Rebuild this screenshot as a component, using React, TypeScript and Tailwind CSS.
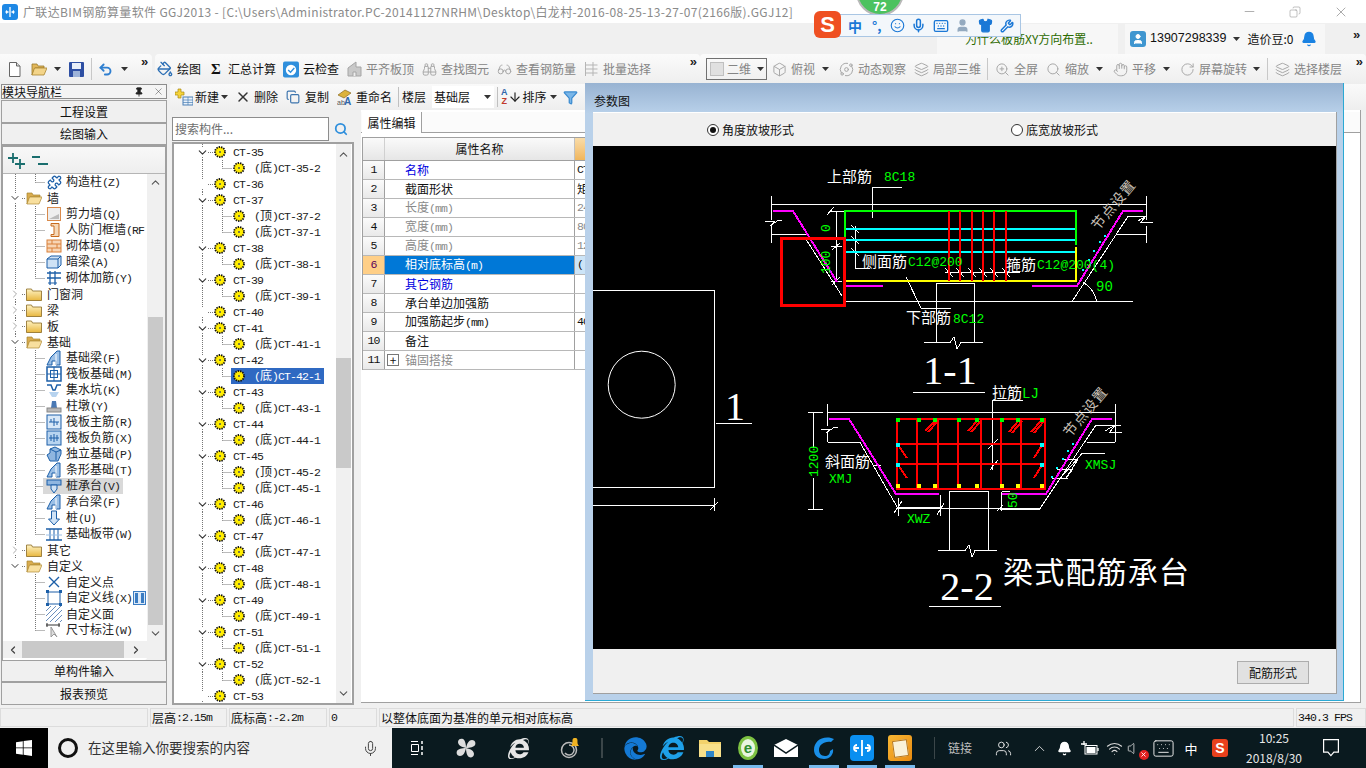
import React from "react";
import { Mic, ChevronDown, ChevronRight, ChevronUp, ChevronLeft, Bell, Wifi, X, Copy, Minus, Undo2, PaintBucket, Binoculars, Glasses, Box, Orbit, Layers, ZoomIn, Search, Hand, RotateCw, Smile, Shirt, Wrench, Keyboard, User, Puzzle, Users, Volume, Filter, ArrowDown, Pin } from "lucide-react";
import { FaEdge, FaInternetExplorer } from "react-icons/fa";

const MONO = "[font-family:'Liberation_Mono','Noto_Sans_CJK_SC',monospace] text-[11.500px] tracking-[-0.9px]";

function Mx({ t }: { t: string }) {
  const parts = t.split(/([\x20-\x7e]+)/).filter(Boolean);
  return (
    <>
      {parts.map((p, i) =>
        /^[\x20-\x7e]+$/.test(p) ? (
          <span key={i} className={MONO}>{p}</span>
        ) : (
          <span key={i}>{p}</span>
        )
      )}
    </>
  );
}

const Caret = () => (
  <svg width="7" height="4" viewBox="0 0 7 4" className="shrink-0"><path d="M0 0h7L3.500 4z" fill="#333" /></svg>
);

function Tool({ icon, label, dim, caret, w }: { icon: React.ReactNode; label: string; dim?: boolean; caret?: boolean; w?: string }) {
  return (
    <div className={"flex items-center shrink-0 gap-1 " + (dim ? "text-[#858585]" : "text-[#111]")}>
      <span className="w-4 h-4 flex items-center justify-center shrink-0">{icon}</span>
      <span className="whitespace-nowrap leading-4">{label}</span>
      {caret ? <span className={"flex justify-center " + (w ?? "w-[13px]")}><Caret /></span> : null}
    </div>
  );
}

const Sep = () => <div className="w-px h-[22px] bg-[#c8c8c8] shrink-0" />;
const More = () => <span className="text-[13px] leading-none font-bold text-[#222] [font-family:'Liberation_Sans',sans-serif]">»</span>;

function TitleBar() {
  return (
    <div className="h-[23px] bg-white flex items-center shrink-0">
      <div className="w-4 h-4 ml-[2px] rounded-[3px] bg-[#1e88e5] flex items-center justify-center">
        <svg width="12" height="12" viewBox="0 0 12 12"><path d="M6 1v10M1.500 6h3M7.500 6h3M3 4.500a2 2 0 0 0 0 3M9 4.500a2 2 0 0 1 0 3" stroke="#fff" strokeWidth="1.300" fill="none" /></svg>
      </div>
      <span className="ml-[5px] text-[#8a8a8a] text-[12px] whitespace-nowrap tracking-[0.35px]">广联达BIM钢筋算量软件 GGJ2013 - [C:\Users\Administrator.PC-20141127NRHM\Desktop\白龙村-2016-08-25-13-27-07(2166版).GGJ12]</span>
      <div className="ml-auto mr-[2px] flex items-center text-[#808080]">
        <span className="w-[46px] flex justify-center"><Minus size={15} strokeWidth={1} /></span>
        <span className="w-[46px] flex justify-center"><Copy size={12} strokeWidth={1} className="scale-x-[-1]" /></span>
        <span className="w-[46px] flex justify-center"><X size={16} strokeWidth={1} /></span>
      </div>
    </div>
  );
}

function InfoRow() {
  return (
    <div className="h-[31px] flex items-center shrink-0 bg-[#f0f0f0] pl-[937px]">
      <div className="w-[181px] h-[30px] bg-[#f7f7f7] flex items-center pl-[28px] pt-[1px] text-[#2c6b00] whitespace-nowrap">为什么板筋XY方向布置..</div>
      <div className="w-[200px] ml-[7px] h-[30px] bg-[#f7f7f7] flex items-center text-[#111]">
        <span className="w-4 h-4 ml-[5px] rounded-[3px] bg-[#3f96d0] flex items-center justify-center"><User size={12} color="#fff" fill="#fff" /></span>
        <span className="ml-1 [font-family:'Liberation_Sans',sans-serif] text-[12.500px]">13907298339</span>
        <span className="ml-[7px]"><Caret /></span>
        <span className="ml-[7px] whitespace-nowrap">造价豆:0</span>
        <span className="ml-[8px]"><Bell size={16} color="#1a82e2" fill="#1a82e2" /></span>
      </div>
      <span className="ml-[28px] -mt-2"><More /></span>
    </div>
  );
}

const Page = () => <svg width="13" height="15" viewBox="0 0 13 15"><path d="M1.500.500h7l3.500 3.500v10.500h-10.500z" fill="#fff" stroke="#666" /><path d="M8.500.500v3.500h3.500" fill="#ddd" stroke="#666" /></svg>;
const FolderO = () => <svg width="16" height="14" viewBox="0 0 16 14"><path d="M1 2h5l1 2h6v2H4L1 13z" fill="#e2b75a" stroke="#9a7a2c" strokeWidth=".8" /><path d="M3.500 6H16l-3 7H1z" fill="#f3d489" stroke="#a8842f" strokeWidth=".8" /></svg>;
const Floppy = () => <svg width="15" height="15" viewBox="0 0 15 15"><rect width="15" height="15" rx="1" fill="#2e4fa3" /><rect x="3" y="1" width="9" height="6" fill="#e8eef8" /><rect x="4" y="9" width="7" height="6" fill="#9db3d9" /></svg>;
const CloudCheck = () => <svg width="17" height="17" viewBox="0 0 17 17"><rect width="17" height="17" rx="2" fill="#2f8fdc" /><circle cx="8.500" cy="9" r="5.500" fill="#fff" /><path d="M5.500 9l2.500 2.500 4-4.500" stroke="#2f8fdc" strokeWidth="1.500" fill="none" /></svg>;
const GrayBlock = () => <svg width="15" height="16" viewBox="0 0 15 16"><path d="M1 15V7l8-6v5h5v9z" fill="#c9c9c9" stroke="#a5a5a5" /><path d="M6 15v-4h3v4" fill="#eee" stroke="#a5a5a5" /></svg>;
const Batch = () => <svg width="15" height="16" viewBox="0 0 15 16" stroke="#b5b5b5" fill="none"><path d="M1.500 1v14M1.500 4h12M1.500 8h12M1.500 12h12M9 1v14" /></svg>;
const GreyG = { size: 15, color: "#a8a8a8", strokeWidth: 1.600 };

function ToolRow() {
  return (
    <div className="h-[30px] flex shrink-0 bg-[#f0f0f0] items-stretch">
      <div className="w-[152px] rounded-r-[4px] bg-gradient-to-b from-[#fbfbfb] to-[#eeeeee] flex items-center shrink-0 relative">
        <span className="ml-[8px]"><Page /></span>
        <span className="ml-[10px]"><FolderO /></span>
        <span className="ml-[7px]"><Caret /></span>
        <span className="ml-[8px]"><Floppy /></span>
        <span className="ml-[7px] mr-[6px]"><Sep /></span>
        <Undo2 size={15} color="#2f7fd0" strokeWidth={3} />
        <span className="ml-[8px]"><Caret /></span>
        <span className="ml-[13px] -mt-4"><More /></span>
      </div>
      <div className="w-[545px] ml-[3px] rounded-[4px] bg-gradient-to-b from-[#fbfbfb] to-[#eeeeee] flex items-center pl-[2px] gap-[7px] shrink-0">
        <Tool icon={<PaintBucket size={16} color="#2c6fb5" />} label="绘图" />
        <Tool icon={<span className="font-bold text-[15px] [font-family:'Liberation_Serif',serif]">Σ</span>} label="汇总计算" />
        <Tool icon={<CloudCheck />} label="云检查" />
        <Tool dim icon={<GrayBlock />} label="平齐板顶" />
        <Tool dim icon={<Binoculars {...GreyG} />} label="查找图元" />
        <Tool dim icon={<Glasses {...GreyG} />} label="查看钢筋量" />
        <Tool dim icon={<Batch />} label="批量选择" />
        <span className="ml-auto mr-[3px] -mt-4"><More /></span>
      </div>
      <div className="flex-1 rounded-[4px] bg-gradient-to-b from-[#fbfbfb] to-[#eeeeee] flex items-center pl-[6px] relative">
        <div className="w-[61px] h-[22px] border border-[#707070] flex items-center shrink-0 text-[#858585]">
          <span className="ml-[3px] w-[14px] h-[14px] bg-[#e0e0e0] border border-[#c0c0c0]" />
          <span className="ml-[3px]">二维</span>
          <span className="ml-[6px]"><Caret /></span>
        </div>
        <div className="flex items-center gap-[6px] ml-[4px]">
          <Tool dim caret icon={<Box {...GreyG} />} label="俯视" />
          <Tool dim icon={<Orbit {...GreyG} />} label="动态观察" />
          <span className="ml-px"><Tool dim icon={<Layers {...GreyG} />} label="局部三维" /></span>
          <Sep />
          <Tool dim icon={<ZoomIn {...GreyG} />} label="全屏" />
          <span className="ml-px"><Tool dim caret icon={<Search {...GreyG} />} label="缩放" /></span>
          <Tool dim caret icon={<Hand {...GreyG} />} label="平移" />
          <Tool dim caret w="w-[10px]" icon={<RotateCw {...GreyG} />} label="屏幕旋转" />
          <Sep />
          <Tool dim icon={<Layers {...GreyG} />} label="选择楼层" />
        </div>
        <span className="ml-auto mr-[3px] -mt-4"><More /></span>
      </div>
    </div>
  );
}

const Ic = ({ children }: { children: React.ReactNode }) => (
  <svg width="16" height="16" viewBox="0 0 16 16" fill="none" className="shrink-0">{children}</svg>
);
const B = "#1c5fa8";
const icons: Record<string, React.ReactNode> = {
  gz: <Puzzle size={15} color={B} strokeWidth={2} />,
  jlq: <Ic><rect x="1.500" y="1.500" width="13" height="13" fill="#eee" stroke="#d98a4b" /><path d="M3 13h10V8z" fill="#bbb" /></Ic>,
  rf: <Ic><path d="M5 1.500h8v13H5v-2h3V4H5z" fill="#f5d8b8" stroke="#c86a1e" /></Ic>,
  qt: <Ic><rect x="1" y="2" width="14" height="12" fill="#f7d5b5" stroke="#d9803a" /><path d="M1 6h14M1 10h14M6 2v4M11 6v4M6 10v4" stroke="#d9803a" /></Ic>,
  al: <Ic><path d="M1 5l4-3h10v9l-3 3H1z" fill="#cfe2f5" stroke={B} /><path d="M1 5h11v9M12 5l3-3" stroke={B} /></Ic>,
  jj: <Ic><path d="M1 3h14M1 8h14M4 1v14M9 1v14" stroke={B} strokeWidth="1.300" /><path d="M2 13h9" stroke={B} /></Ic>,
  jcl: <Ic><path d="M1 15l4-8 6-6h3v14h-4v-4H6v4z" fill="#9cc0e6" stroke={B} /><path d="M10 15V4" stroke="#fff" /></Ic>,
  fb: <Ic><rect x="1" y="1" width="14" height="14" stroke={B} strokeWidth="1.500" /><rect x="4.500" y="4.500" width="7" height="7" stroke={B} /><path d="M8 1v14M1 8h14" stroke={B} /></Ic>,
  jsk: <Ic><path d="M1 3h4l2 5h2l2-5h4" stroke={B} strokeWidth="1.500" /><path d="M3 10h10l-3 5H6z" fill="#b7d3ef" /></Ic>,
  zd: <Ic><path d="M6 3h4l1 7H5z" fill="#4a79b4" /><rect x="1" y="10" width="14" height="4" fill="#b9b9b9" stroke="#888" /></Ic>,
  fz: <Ic><rect x="1" y="1" width="14" height="14" fill="#d8e8f8" stroke={B} /><path d="M3 8h10M8 4v8M5 5v3M11 8v3" stroke={B} /></Ic>,
  fj: <Ic><rect x="1" y="1" width="14" height="14" fill="#b8d4f0" stroke={B} /><path d="M3 8h10M8 4v8M5 5v6M11 5v6" stroke={B} /></Ic>,
  dl: <Ic><path d="M1 9l3-2V3l5-2 6 3v4l-3 7H4z" fill="#8fb6e0" stroke={B} /><path d="M4 3l6 3v8M10 6l5-2" stroke={B} /></Ic>,
  zct: <Ic><rect x="1" y="2" width="14" height="5" fill="#8fb6e0" stroke={B} /><path d="M5 7h6v4l-3 4-3-4z" fill="#cfe2f5" stroke={B} /></Ic>,
  zhuang: <Ic><path d="M5.500 1h5v8h3l-5.500 6-5.500-6h3z" fill="#cfe2f5" stroke={B} /></Ic>,
  jb: <Ic><path d="M0 3h16M0 14h16" stroke={B} strokeWidth="1.500" /><path d="M4 3v11M8 3v11M12 3v11" stroke={B} /><path d="M0 9h16" stroke="#9cc0e6" /></Ic>,
  dian: <Ic><path d="M3 3l10 10M13 3L3 13" stroke={B} strokeWidth="1.400" /></Ic>,
  xian: <Ic><rect x="2" y="2" width="12" height="12" stroke={B} /><path d="M0 0h3v3H0zM13 0h3v3h-3zM0 13h3v3H0zM13 13h3v3h-3z" fill={B} /></Ic>,
  mian: <Ic><path d="M0 5L5 0M0 10L10 0M0 15L15 0M4 16L16 4M9 16l7-7M14 16l2-2" stroke="#6b8fbd" /></Ic>,
  cc: <Ic><path d="M0 3h14M1 1v4M13 1v4" stroke="#333" /><path d="M5 5v10l3-3 3 3z" fill="#ddd" stroke="#999" /></Ic>,
};

const Folder = ({ open }: { open?: boolean }) =>
  open ? (
    <svg width="16" height="13" viewBox="0 0 16 13"><path d="M1 1h5l1 2h7v2H4L1 12z" fill="#d9ac4f" stroke="#a8842f" strokeWidth=".7" /><path d="M3.500 5H16l-3 7H1z" fill="#f8df9e" stroke="#b08a35" strokeWidth=".7" /></svg>
  ) : (
    <svg width="16" height="13" viewBox="0 0 16 13"><defs><linearGradient id="fg" x1="0" y1="0" x2="0" y2="1"><stop offset="0" stopColor="#fff3c4" /><stop offset="1" stopColor="#e8b73f" /></linearGradient></defs><path d="M.500 1h5l1 2h9v9.500H.500z" fill="url(#fg)" stroke="#8a6a22" strokeWidth=".8" /></svg>
  );

type LRow = { t: string; i?: string; f?: "o" | "c"; v0?: boolean; last?: boolean; hi?: boolean; extra?: boolean };
const leftRows: LRow[] = [
  { t: "构造柱(Z)", i: "gz", v0: true, last: true },
  { t: "墙", f: "o", v0: true },
  { t: "剪力墙(Q)", i: "jlq", v0: true },
  { t: "人防门框墙(RF", i: "rf", v0: true },
  { t: "砌体墙(Q)", i: "qt", v0: true },
  { t: "暗梁(A)", i: "al", v0: true },
  { t: "砌体加筋(Y)", i: "jj", v0: true, last: true },
  { t: "门窗洞", f: "c", v0: true },
  { t: "梁", f: "c", v0: true },
  { t: "板", f: "c", v0: true },
  { t: "基础", f: "o", v0: true },
  { t: "基础梁(F)", i: "jcl", v0: true },
  { t: "筏板基础(M)", i: "fb", v0: true },
  { t: "集水坑(K)", i: "jsk", v0: true },
  { t: "柱墩(Y)", i: "zd", v0: true },
  { t: "筏板主筋(R)", i: "fz", v0: true },
  { t: "筏板负筋(X)", i: "fj", v0: true },
  { t: "独立基础(P)", i: "dl", v0: true },
  { t: "条形基础(T)", i: "jcl", v0: true },
  { t: "桩承台(V)", i: "zct", v0: true, hi: true },
  { t: "承台梁(F)", i: "jcl", v0: true },
  { t: "桩(U)", i: "zhuang", v0: true },
  { t: "基础板带(W)", i: "jb", v0: true, last: true },
  { t: "其它", f: "c", v0: true },
  { t: "自定义", f: "o" },
  { t: "自定义点", i: "dian" },
  { t: "自定义线(X)", i: "xian", extra: true },
  { t: "自定义面", i: "mian" },
  { t: "尺寸标注(W)", i: "cc", last: true },
];

function LeftTree() {
  return (
    <div className="flex-1 overflow-hidden">
      {leftRows.map((r, k) => (
        <div key={k} className="h-4 flex items-center whitespace-nowrap text-[#222]">
          {r.f ? (
            <>
              <span className="w-[23px] h-4 relative shrink-0 flex items-center">
                {r.v0 ? <svg width="23" height="16" className="absolute left-0 top-0"><path d="M12.500 0v3M12.500 13v3M19 8.500h4" stroke="#777" strokeDasharray="1 1" /></svg> : <svg width="23" height="16" className="absolute left-0 top-0"><path d="M19 8.500h4" stroke="#777" strokeDasharray="1 1" /></svg>}
                <span className="ml-[6px] relative">
                  {r.f === "o" ? <ChevronDown size={12} color="#333" strokeWidth={2} /> : <ChevronRight size={12} color="#a8a8a8" strokeWidth={2} />}
                </span>
              </span>
              <Folder open={r.f === "o"} />
              <span className="ml-[5px]"><Mx t={r.t} /></span>
            </>
          ) : (
            <>
              <svg width="43" height="16" className="shrink-0">
                <path d={(r.v0 ? "M12.500 0v16" : "") + (r.last ? "M32.500 0v8.500" : "M32.500 0v16") + "M32.500 8.500h10"} stroke="#777" strokeDasharray="1 1" fill="none" />
              </svg>
              <span className={"flex items-center h-4 pr-[3px] -ml-[3px] pl-[3px] " + (r.hi ? "bg-[#d9d9d9]" : "")}>
                <span className="w-4 h-4 flex items-center justify-center shrink-0">{icons[r.i!]}</span>
                <span className="ml-[4px]"><Mx t={r.t} /></span>
                {r.extra ? <span className="ml-[1px] w-[13px] h-[14px] bg-[#dce9f7] border border-[#3a7cc2] flex items-center justify-center shrink-0"><span className="w-[9px] h-[10px] border-x-[3px] border-[#3a7cc2]" /></span> : null}
              </span>
            </>
          )}
        </div>
      ))}
    </div>
  );
}

function LeftPanel() {
  const btn = "border border-[#a0a0a0] bg-[#f0f0f0] flex items-center justify-center text-[#111] shrink-0";
  return (
    <div className="w-[168px] shrink-0 flex flex-col pl-[1px] pr-[1px]">
      <div className="h-[15px] border border-[#8c8c8c] bg-[#f4f4f4] flex items-center leading-none text-[#111] shrink-0">
        <span>模块导航栏</span>
        <span className="ml-auto mr-[9px]"><Pin size={10} color="#222" fill="#222" /></span>
        <span className="mr-[2px]"><X size={11} color="#333" strokeWidth={1} /></span>
      </div>
      <div className={"mt-px h-[23px] " + btn}>工程设置</div>
      <div className={"h-[22px] " + btn}>绘图输入</div>
      <div className="h-[515px] border-2 border-[#a0a0a0] flex flex-col shrink-0">
        <div className="h-[26px] bg-gradient-to-b from-[#f8f8f8] to-[#eeeeee] flex items-center pl-[5px] shrink-0">
          <svg width="40" height="17" viewBox="0 0 40 17" fill="none"><path d="M5 1v10M0 6h10M12 7v10M7 12h10" stroke="#1a6e6e" strokeWidth="1.800" /><path d="M24 5h8M30 12h10" stroke="#1a6e6e" strokeWidth="1.800" /></svg>
        </div>
        <div className="flex-1 flex bg-[#f0f0f0] min-h-0 border-t border-[#b5b5b5]">
          <div className="w-[144px] bg-white flex flex-col rounded-br-[3px]"><LeftTree /></div>
          <div className="w-[16px] flex flex-col bg-[#f0f0f0] items-center">
            <ChevronUp size={13} color="#555" className="mt-[2px] mb-[128px]" />
            <div className="w-[15px] flex-1 bg-[#c9c9c9]" />
            <ChevronDown size={13} color="#555" className="mt-[2px] mb-[20px]" />
          </div>
        </div>
        <div className="h-[17px] flex items-center bg-[#f0f0f0] shrink-0 -mt-[19px] relative">
          <span className="w-[19px] flex justify-center"><ChevronLeft size={12} color="#444" strokeWidth={2.500} /></span>
          <span className="w-[102px] h-full bg-[#c9c9c9]" />
          <span className="w-[24px] flex justify-center"><ChevronRight size={12} color="#444" strokeWidth={2.500} /></span>
        </div>
      </div>
      <div className={"h-[22px] " + btn}>单构件输入</div>
      <div className={"h-[23px] " + btn}>报表预览</div>
    </div>
  );
}

const Gear = () => (
  <svg width="14" height="14" viewBox="0 0 14 14" className="shrink-0">
    <circle cx="7" cy="7" r="5" fill="#ffe800" stroke="#111" strokeWidth="1.800" strokeDasharray="1.400 1" />
    <circle cx="7" cy="7" r="2.600" fill="#fff200" />
    <circle cx="7" cy="7" r="1" fill="#555" />
  </svg>
);

type CT = { n: string; c: string[] };
const cts: CT[] = [
  { n: "35", c: ["底)CT-35-2"] },
  { n: "36", c: [] },
  { n: "37", c: ["顶)CT-37-2", "底)CT-37-1"] },
  { n: "38", c: ["底)CT-38-1"] },
  { n: "39", c: ["底)CT-39-1"] },
  { n: "40", c: [] },
  { n: "41", c: ["底)CT-41-1"] },
  { n: "42", c: ["底)CT-42-1"] },
  { n: "43", c: ["底)CT-43-1"] },
  { n: "44", c: ["底)CT-44-1"] },
  { n: "45", c: ["顶)CT-45-2", "底)CT-45-1"] },
  { n: "46", c: ["底)CT-46-1"] },
  { n: "47", c: ["底)CT-47-1"] },
  { n: "48", c: ["底)CT-48-1"] },
  { n: "49", c: ["底)CT-49-1"] },
  { n: "51", c: ["底)CT-51-1"] },
  { n: "52", c: ["底)CT-52-1"] },
  { n: "53", c: [] },
];

function CompTree() {
  return (
    <div className="flex-1 overflow-hidden">
      {cts.map((g) => (
        <React.Fragment key={g.n}>
          <div className="h-4 flex items-center text-[#222] whitespace-nowrap">
            <span className="w-[39px] h-4 relative shrink-0 flex items-center justify-end">
              <svg width="39" height="16" className="absolute left-0 top-0">
                <path d="M28.500 0v3M28.500 13v3M34 8.500h5" stroke="#777" strokeDasharray="1 1" fill="none" />
              </svg>
              {g.c.length ? <span className="absolute left-[22px] top-[2px]"><ChevronDown size={13} color="#333" strokeWidth={2} /></span> : null}
            </span>
            <Gear />
            <span className="ml-[6px]"><Mx t={"CT-" + g.n} /></span>
          </div>
          {g.c.map((c, i) => {
            const last = i === g.c.length - 1;
            const sel = g.n === "42";
            return (
              <div key={i} className="h-4 flex items-center text-[#222] whitespace-nowrap">
                <svg width="58" height="16" className="shrink-0">
                  <path d={"M28.500 0v16M48.500 0" + (last ? "v8.500" : "v16") + "M48.500 8.500h10"} stroke="#777" strokeDasharray="1 1" fill="none" />
                </svg>
                <span className={"flex items-center h-4 pl-[1px] pr-[4px] -ml-[1px] " + (sel ? "bg-[#2f69c2] text-white" : "")}>
                  <Gear />
                  <span className="ml-[8px]"><Mx t={"(" + c} /></span>
                </span>
              </div>
            );
          })}
        </React.Fragment>
      ))}
    </div>
  );
}

function MidColumn() {
  const tip = "h-[26px] flex items-center shrink-0 bg-gradient-to-b from-[#fafafa] to-[#eeeeee] rounded-l-[3px] ml-[2px] text-[#111] whitespace-nowrap";
  return (
    <div className="flex-1 min-w-0 flex flex-col">
      <div className={tip}>
        <svg width="18" height="18" viewBox="0 0 18 18" className="ml-[5px] shrink-0"><path d="M3 1h3v3h3v3H6v3H3V7H0V4h3z" fill="#f5d33a" stroke="#a98a16" strokeWidth=".7" /><rect x="8" y="9" width="10" height="8" fill="#e9f1fa" stroke="#4b7fb5" /><path d="M8 12h10M8 14.500h10M13 9v8" stroke="#4b7fb5" strokeWidth=".7" /></svg>
        <span className="ml-[2px]">新建</span>
        <span className="ml-[2px]"><Caret /></span>
        <X size={16} color="#333" strokeWidth={2.200} className="ml-[7px]" />
        <span className="ml-[3px]">删除</span>
        <Copy size={14} color="#3c74ad" className="ml-[8px]" />
        <span className="ml-[5px]">复制</span>
        <svg width="18" height="17" viewBox="0 0 18 17" className="ml-[8px] shrink-0"><path d="M1 6l7-5 6 3-7 5z" fill="#dcb23c" stroke="#8a6a22" strokeWidth=".7" /><text x="7" y="16" fontSize="10" fontWeight="bold" fill="#2f66aa" className="[font-family:'Liberation_Sans',sans-serif]">A</text><text x="0" y="16" fontSize="7" fill="#555" className="[font-family:'Liberation_Sans',sans-serif]">ab</text></svg>
        <span className="ml-[1px]">重命名</span>
        <span className="w-px h-[20px] bg-[#c0c0c0] ml-[6px]" />
        <span className="ml-[3px]">楼层</span>
        <div className="ml-[6px] w-[62px] h-[22px] bg-white flex items-center pl-[2px]">
          <span>基础层</span>
          <span className="ml-auto mr-[3px]"><Caret /></span>
        </div>
        <span className="w-px h-[20px] bg-[#c0c0c0] ml-[3px]" />
        <span className="ml-[3px] flex flex-col text-[9px] leading-[9px] font-bold [font-family:'Liberation_Sans',sans-serif] items-center"><span className="text-[#2f66aa]">A</span><span className="text-[#c0392b]">Z</span></span>
        <ArrowDown size={14} color="#222" />
        <span className="ml-[1px]">排序</span>
        <span className="ml-[3px]"><Caret /></span>
        <Filter size={15} color="#3b8bd0" fill="#7ab6e8" className="ml-[6px]" />
      </div>
      <div className="flex-1 flex min-h-0">
        <div className="w-[183px] ml-[4px] flex flex-col shrink-0">
          <div className="h-[32px] pt-[7px] flex shrink-0">
            <div className="w-[157px] h-[24px] bg-white border border-[#8d8d8d] text-[#6e6e6e] flex items-center pl-[2px]">搜索构件...</div>
            <span className="w-[24px] h-[24px] flex items-center justify-center"><Search size={14} color="#2f8fdc" strokeWidth={3} /></span>
          </div>
          <div className="h-[563px] border-2 border-[#a0a0a0] bg-white flex relative mr-[1px] overflow-hidden">
            <CompTree />
            <div className="w-[15px] mr-[1px] bg-[#f0f0f0] flex flex-col items-center shrink-0 relative">
              <ChevronUp size={13} color="#555" className="mt-[4px] mb-[197px]" />
              <div className="w-[15px] h-[110px] bg-[#c9c9c9]" />
              <ChevronDown size={13} color="#555" className="mt-auto mb-[3px]" />
            </div>
          </div>
        </div>
        <PropPanel />
      </div>
    </div>
  );
}

type PR = { n: number; t: string; v?: string; c?: string; sel?: boolean; plus?: boolean };
const props: PR[] = [
  { n: 1, t: "名称", v: "CT", c: "text-[#0000e0]" },
  { n: 2, t: "截面形状", v: "矩" },
  { n: 3, t: "长度(mm)", v: "24", c: "text-[#8a8a8a]" },
  { n: 4, t: "宽度(mm)", v: "80", c: "text-[#8a8a8a]" },
  { n: 5, t: "高度(mm)", v: "12", c: "text-[#8a8a8a]" },
  { n: 6, t: "相对底标高(m)", v: "(", sel: true },
  { n: 7, t: "其它钢筋", c: "text-[#0000e0]" },
  { n: 8, t: "承台单边加强筋" },
  { n: 9, t: "加强筋起步(mm)", v: "40" },
  { n: 10, t: "备注" },
  { n: 11, t: "锚固搭接", c: "text-[#8a8a8a]", plus: true },
];

function PropPanel() {
  return (
    <div className="flex-1 min-w-0 flex flex-col ml-[6px] mr-[5px] mb-[5px] bg-white border-r border-b border-[#a0a0a0]">
      <div className="h-[21px] mt-[2px] border-b border-[#a0a0a0] flex items-end shrink-0 bg-[#fbfbfb]">
        <div className="h-[21px] w-[60px] ml-px border-r border-[#a0a0a0] bg-white flex items-center justify-center text-[#111] -mb-px">属性编辑</div>
      </div>
      <div className="h-[4px] shrink-0" />
      <div className="w-[970px] border-l border-t border-[#a0a0a0] ml-px flex flex-col shrink-0">
        <div className="h-[23px] flex border-b border-[#a0a0a0]">
          <div className="w-[22px] bg-gradient-to-b from-[#fafafa] to-[#e6e6e6] border-r border-[#d0d0d0]" />
          <div className="w-[190px] bg-gradient-to-b from-[#fafafa] to-[#e6e6e6] border-r border-[#c0c0c0] flex items-center justify-center text-[#111]">属性名称</div>
          <div className="flex-1 bg-gradient-to-b from-[#f9dca8] to-[#f0b65c]" />
        </div>
        {props.map((p) => (
          <div key={p.n} className="h-[19px] flex border-b border-[#b8b8b8]">
            <div className={"w-[22px] flex items-center justify-center border-r border-[#a0a0a0] shrink-0 " + (p.sel ? "bg-[#ffcf87] text-[#5a005a]" : "bg-gradient-to-b from-[#fbfbfb] to-[#e9e9e9] text-[#111]")}>
              <span className={MONO}>{p.n}</span>
            </div>
            <div className={"w-[190px] flex items-center shrink-0 border-r border-[#a0a0a0] " + (p.sel ? "bg-[#0078d7] text-white" : p.c ?? "text-[#111]")}>
              {p.plus ? (
                <span className="ml-[2px] w-[12px] h-[12px] border border-[#777] flex items-center justify-center text-[#111] text-[12px] leading-none">+</span>
              ) : null}
              <span className={p.plus ? "ml-[6px]" : "ml-[20px]"}><Mx t={p.t} /></span>
            </div>
            <div className={"flex-1 flex items-center pl-[2px] " + (p.sel ? "bg-[#cce4f7]" : "") + " " + (p.c === "text-[#8a8a8a]" ? "text-[#8a8a8a]" : "text-[#111]")}>
              <Mx t={p.v ?? ""} />
            </div>
          </div>
        ))}
      </div>
    </div>
  );
}

function StatusBar() {
  const c = "h-[19px] border border-[#dcdcdc] bg-[#f0f0f0] flex items-center pl-[1px] text-[#111] whitespace-nowrap shrink-0";
  return (
    <div className="h-[20px] flex shrink-0 bg-[#f0f0f0] gap-[2px]">
      <div className={c + " w-[148px]"} />
      <div className={c + " w-[77px]"}><Mx t="层高:2.15m" /></div>
      <div className={c + " w-[98px]"}><Mx t="底标高:-2.2m" /></div>
      <div className={c + " w-[48px]"}><Mx t="0" /></div>
      <div className={c + " w-[915px]"}><Mx t="以整体底面为基准的单元相对底标高" /></div>
      <div className={c + " w-[70px]"}><Mx t="340.3 FPS" /></div>
    </div>
  );
}

function Slot({ w, children, on }: { w: string; children?: React.ReactNode; on?: boolean }) {
  return (
    <div className={"h-full flex items-center justify-center shrink-0 relative " + w}>
      {children}
      {on ? <span className="absolute bottom-0 inset-x-[4px] h-[3px] bg-[#76b9ed]" /> : null}
    </div>
  );
}

function Taskbar() {
  return (
    <div className="h-[40px] flex bg-[#0a1a1f] shrink-0 text-[#e8e8e8]">
      <div className="w-[48px] bg-black flex items-center justify-center shrink-0">
        <svg width="16" height="16" viewBox="0 0 16 16"><path d="M0 2.200L6.800 1.200v6.300H0zM7.600 1.100L16 0v7.500H7.600zM0 8.300h6.800v6.500L0 13.800zM7.600 8.300H16V16l-8.400-1.200z" fill="#fff" /></svg>
      </div>
      <div className="w-[344px] bg-[#f0f0f0] flex items-center shrink-0 text-[#333] text-[13.500px]">
        <span className="ml-[10px] w-[20px] h-[20px] rounded-full border-[3px] border-[#111]" />
        <span className="ml-[10px] whitespace-nowrap">在这里输入你要搜索的内容</span>
        <span className="ml-auto mr-[13px]"><Mic size={17} color="#444" strokeWidth={1.400} /></span>
      </div>
      <Slot w="w-[48px]"><svg width="16" height="16" viewBox="0 0 16 16" fill="none" stroke="#fff"><path d="M3 1.500h7M3 14.500h7M3.500 4.500h7v7h-7z" /><path d="M14 1v3M14 6v4M14 12v3" strokeWidth="1.500" /></svg></Slot>
      <Slot w="w-[52px]"><svg width="22" height="22" viewBox="0 0 22 22" fill="#ddd"><path d="M11 11C6 10 3 8 3 5s3-4 5-3 3 5 3 9zM11 11c1-5 3-8 6-8s4 3 3 5-5 3-9 3zM11 11c5 1 8 3 8 6s-3 4-5 3-3-5-3-9zM11 11c-1 5-3 8-6 8s-4-3-3-5 5-3 9-3z" /></svg></Slot>
      <Slot w="w-[52px]"><FaInternetExplorer size={21} color="#e6e6e6" /></Slot>
      <Slot w="w-[54px]">
        <svg width="24" height="24" viewBox="0 0 24 24" fill="none"><circle cx="10" cy="14" r="7.500" stroke="#bbb" strokeWidth="1.500" /><path d="M10 9a5 5 0 1 1-4 8" stroke="#bbb" strokeWidth="1.500" /><path d="M12 10c3-3 0-7 3-8h2c3 1 0 5 3 8z" fill="#f0b323" /></svg>
      </Slot>
      <div className="w-[19px] flex items-center justify-start shrink-0"><span className="w-[2px] h-[20px] bg-[#3b4649] ml-[3px]" /></div>
      <Slot w="w-[36px]"><FaEdge size={23} color="#1479d4" /></Slot>
      <Slot w="w-[38px]"><FaInternetExplorer size={24} color="#1ea0e8" /></Slot>
      <Slot w="w-[38px]">
        <svg width="22" height="22" viewBox="0 0 22 22"><path d="M0 3h8l2 2h12v15H0z" fill="#f3d26b" /><rect x="0" y="7" width="22" height="13" fill="#f8e08a" /><path d="M7 20v-6h8v6z" fill="#2f86c8" /></svg>
      </Slot>
      <Slot w="w-[38px]" on><svg width="24" height="26" viewBox="0 0 24 26"><ellipse cx="12" cy="13" rx="10" ry="12" fill="#7dc242" /><ellipse cx="12" cy="13" rx="7" ry="9" fill="#e8f5e0" /><text x="12" y="18" textAnchor="middle" fontSize="15" fontWeight="bold" fill="#2f8f2f" className="[font-family:'Liberation_Sans',sans-serif]">e</text></svg></Slot>
      <Slot w="w-[38px]"><svg width="24" height="18" viewBox="0 0 24 18"><path d="M0 6L12 0l12 6v12H0z" fill="#fff" /><path d="M0 6l12 8 12-8" stroke="#0a1a1f" strokeWidth="1.500" fill="none" /></svg></Slot>
      <Slot w="w-[38px]" on><svg width="24" height="26" viewBox="0 0 24 26"><path d="M19 3C9 1 2 7 2 15c0 6 5 9 10 9 6 0 10-5 9-10l-3 2c0 3-2 5-5 5-4 0-6-3-6-6 0-5 5-9 12-8l3-3z" fill="#1a8fe8" /></svg></Slot>
      <Slot w="w-[38px]" on><span className="w-[24px] h-[26px] rounded-[4px] bg-[#0a8ff0] flex items-center justify-center"><svg width="18" height="18" viewBox="0 0 18 18" fill="none" stroke="#fff" strokeWidth="1.800"><path d="M9 1v16M1 9h5M12 9h5M4 6a3 3 0 0 0 0 6M14 6a3 3 0 0 1 0 6" /></svg></span></Slot>
      <Slot w="w-[38px]" on><span className="w-[24px] h-[26px] rounded-[3px] bg-gradient-to-br from-[#f7b733] to-[#e98b0f] flex items-center justify-center"><span className="w-[15px] h-[17px] bg-[#f9f1d8] border border-[#b6761a] rotate-[-8deg]" /></span></Slot>
      <div className="w-[23px] flex items-center justify-end shrink-0"><span className="w-px h-[22px] bg-[#3b4649] mr-[7px]" /></div>
      <Slot w="w-[36px]"><span className="text-[12px] text-[#bfbfbf]">链接</span></Slot>
      <Slot w="w-[50px]"><Users size={17} color="#eee" strokeWidth={1.300} /></Slot>
      <Slot w="w-[22px]"><ChevronUp size={17} color="#eee" strokeWidth={1.200} /></Slot>
      <Slot w="w-[28px]"><Bell size={15} color="#fff" fill="#fff" /></Slot>
      <Slot w="w-[24px]"><svg width="18" height="14" viewBox="0 0 18 14" fill="none" stroke="#fff"><rect x="4" y="4.500" width="12" height="8.500" /><rect x="6" y="6.500" width="8" height="5" fill="#fff" /><path d="M17 7v3M3 0v4M0 3h6" strokeWidth="1.300" /></svg></Slot>
      <Slot w="w-[24px]"><Wifi size={17} color="#d8d8d8" strokeWidth={1.500} /></Slot>
      <Slot w="w-[16px]">
        <span className="relative flex"><Volume size={15} color="#eee" strokeWidth={1.200} /><span className="absolute -right-[7px] bottom-[-4px] w-[10px] h-[10px] rounded-full bg-[#e02020] flex items-center justify-center"><X size={7} color="#fff" strokeWidth={3} /></span></span>
      </Slot>
      <Slot w="w-[42px]"><Keyboard size={23} color="#eee" strokeWidth={1} /></Slot>
      <Slot w="w-[14px]"><span className="text-[13px] text-white">中</span></Slot>
      <Slot w="w-[44px]"><span className="w-[16px] h-[18px] rounded-[3px] bg-[#e8401c] flex items-center justify-center text-white font-bold text-[14px] [font-family:'Liberation_Sans',sans-serif]">S</span></Slot>
      <div className="w-[64px] shrink-0 flex flex-col items-center justify-center text-[12px] leading-[20px] text-[#e8e8e8] whitespace-nowrap">
        <span>10:25</span>
        <span>2018/8/30</span>
      </div>
      <Slot w="w-[50px]"><svg width="16" height="18" viewBox="0 0 16 18" fill="none" stroke="#fff" strokeWidth="1.200"><path d="M.600.600h14.800v12.500h-4.500l-3 3.500-3-3.500H.600z" /></svg></Slot>
    </div>
  );
}

function T({ x, y, s = 15, f = "#fff", mono, r, children, ls }: { x: number; y: number; s?: number; f?: string; mono?: boolean; r?: number; children: React.ReactNode; ls?: number }) {
  return (
    <text
      x={x}
      y={y}
      fontSize={s}
      fill={f}
      letterSpacing={ls}
      className={mono ? "[font-family:'Liberation_Mono',monospace]" : "[font-family:'Noto_Sans_CJK_SC',sans-serif]"}
      transform={r !== undefined ? `rotate(${r} ${x} ${y})` : undefined}
    >
      {children}
    </text>
  );
}

function Cad() {
  const G = "#00ff00";
  const big = "[font-family:'Liberation_Serif',serif]";
  const dotsX = [898, 919, 935, 959, 977, 1002, 1018, 1042];
  const vv = [949, 960, 972, 983, 994, 1006];
  return (
    <svg width="743" height="503" viewBox="593 146 743 503" className="block">
      <rect x="593" y="146" width="743" height="503" fill="#000" />
      <circle cx="641.700" cy="384.700" r="33.500" fill="none" stroke="#fff" />
      <g shapeRendering="crispEdges" fill="none">
        <path d="M593 290.500H714.500V487.500H593M716 423.500H752M593 505.500H714.500M714.500 498V511M710 510L718 502" stroke="#fff" />
        <path d="M771.500 204.500H1146.500M771.500 196V220M771.500 226V243M772 234.500H806M765 221H775L770 226L778 220.500H782M806.500 240L842 296M843 301.500H1133M1072 301.500L1128 216.500H1146M1116 234.500H1146.500M1146.500 196V220M1146.500 226V243M1138 221L1146 216L1141 222H1153" stroke="#fff" />
        <path d="M836.500 211V281M831 211H845M831 246.500H842M831 281.500H842M827 215L834 207M832 250L840 243M832 285L840 277" stroke="#fff" />
        <path d="M855.500 226V268H870M851 225L859 233M851 236L859 244M851 248L859 256M872.500 218V187H902M906 277L921 308H951M945 272.500H1020" stroke="#fff" />
        {vv.map((x) => (<path key={x} d={`M${x - 4} 268L${x + 4} 277`} stroke="#fff" />))}
        <path d="M936.500 342V283.500H974.500V342M924 342.500H950L954 337L957 349L961 342.500H983" stroke="#fff" />
        <path d="M1083 282Q1094 289 1096.500 301" stroke="#fff" />
        <path d="M773 211H793L837 282M845 286H883M1032 286H1077L1123 211H1143" stroke="#ff00ff" strokeWidth="2" />
        <path d="M845 229H1076M845 240H1076M845 252H1076" stroke="#00ffff" strokeWidth="2" />
        <path d="M845 238V211H1076V245" stroke="#00ff00" strokeWidth="2" />
        <path d="M845 238V281H1076V247" stroke="#ffff00" strokeWidth="2" />
        {vv.map((x) => (<path key={x} d={`M${x} 211V281`} stroke="#ff0000" strokeWidth="2" />))}
        <rect x="781.500" y="238.500" width="63" height="67" stroke="#ff0000" strokeWidth="3.500" />
        <path d="M827.500 404V426M827.500 432V442M828 412.500H1115.500M821 429H831L826 433L834 427.500H838M828 442.500H860L898 508.500H1040L1096 425H1121M1115.500 404V442M1087 442.500H1115M1105 431L1115 425L1110 432H1122" stroke="#fff" />
        <path d="M813.500 412V448M813.500 478V509M808 412.500H823M808 509.500H823M898 498V516M940 495V516M894 513L902 501M937 515L944 503M898 507.500H940" stroke="#fff" />
        <path d="M949.500 550V491.500H988.500V550M938 550.500H965L969 545L972 557L975 550.500H997" stroke="#fff" />
        <path d="M992.500 400V470M992.500 400H1023M988 449L998 439M990 470L998 460M1001.500 491.500H1010M1001.500 492V511M997 511L1003 505M1000 509.500H1040M873 465H881" stroke="#fff" />
        <path d="M1082 453.500H1105M1082 453.500L1060 478.500H1066M1063 459.500H1078M1057 469H1073M1052 478.500H1068M1078 459.500L1066 478M1073 469L1066 478" stroke="#fff" />
        <path d="M829 419H849L896 494H939M1002 494H1046L1092 419H1112" stroke="#ff00ff" strokeWidth="2" />
        <path d="M897 419H1045V489H897ZM917 419V489M938 419V489M958 419V489M981 419V489M1001 419V489M1021 419V489M897 444H1045M897 464H1045" stroke="#ff0000" strokeWidth="2" />
        <path d="M925 431L936 420M928 432L938 421M968 431L978 420M971 432L981 421M1009 432L1019 420M1012 433L1022 421M1031 432L1042 420M1034 433L1044 421M898 445L907 458M898 465L907 478M1042 445L1034 458M1042 465L1034 478" stroke="#ff0000" strokeWidth="2" />
      </g>
      {dotsX.map((x) => (<g key={x}><rect x={x - 2} y={418} width="4" height="4" fill="#00ff00" /><rect x={x - 2} y={484} width="4" height="4" fill="#ffff00" /></g>))}
      {[[898, 445], [898, 465], [1042, 445], [1042, 465]].map(([x, y]) => (<rect key={x + "-" + y} x={x - 2} y={y - 2} width="4" height="4" fill="#00ffff" />))}
      {[[1083, 270], [1089, 260], [1094, 251], [1100, 242], [1105, 236], [1052, 477], [1057, 468], [1063, 459], [1068, 451], [1073, 444]].map(([x, y]) => (<rect key={x + "-" + y} x={x - 1} y={y - 1} width="2" height="2" fill="#00ffff" />))}

      <T x={827} y={182}>上部筋</T>
      <T x={884} y={181} s={13} f={G} mono>8C18</T>
      <T x={830} y={232} s={13} f={G} mono r={-90}>0</T>
      <T x={830} y={274} s={13} f={G} mono r={-90}>100</T>
      <T x={862} y={267}>侧面筋</T>
      <T x={908} y={266} s={13} f={G} mono>C12@200</T>
      <T x={1006} y={270} s={15}>箍筋</T>
      <T x={1037} y={269} s={13} f={G} mono>C12@200(4)</T>
      <T x={906} y={323}>下部筋</T>
      <T x={953} y={323} s={13} f={G} mono>8C12</T>
      <T x={1096} y={291} s={14} f={G} mono>90</T>
      <T x={1098} y={231} s={14} f="#c9c0b8" r={-50} ls={1}>节点设置</T>
      <T x={1070} y={438} s={14} f="#c9c0b8" r={-50} ls={1}>节点设置</T>
      <T x={992} y={398}>拉筋</T>
      <T x={1022} y={398} s={14} f={G} mono>LJ</T>
      <T x={825} y={467}>斜面筋</T>
      <T x={829} y={483} s={13} f={G} mono>XMJ</T>
      <T x={1085} y={469} s={13} f={G} mono>XMSJ</T>
      <T x={907} y={523} s={13} f={G} mono>XWZ</T>
      <T x={818} y={477} s={13} f={G} mono r={-90}>1200</T>
      <T x={1017} y={508} s={13} f={G} mono r={-90}>50</T>

      <text x={735} y={420} fontSize={40} fill="#fff" textAnchor="middle" className={big}>1</text>
      <text x={950} y={384} fontSize={40} fill="#fff" textAnchor="middle" className={big}>1-1</text>
      <path d="M913 392.500H985M929 606.500H1001" stroke="#fff" shapeRendering="crispEdges" />
      <text x={967} y={600} fontSize={40} fill="#fff" textAnchor="middle" className={big}>2-2</text>
      <T x={1003} y={583} s={30} ls={1.200}>梁式配筋承台</T>
    </svg>
  );
}

function Dialog() {
  return (
    <div className="absolute left-[585px] top-[83px] w-[759px] h-[618px] bg-gradient-to-b from-[#98b3d2] to-[#b9d1ea] to-[5%] border-r border-b border-[#2aa9d4] flex flex-col pl-[8px]">
      <div className="h-[29px] flex items-center pt-[7px] text-[#111] ml-px shrink-0">参数图</div>
      <div className="w-[743px] h-[581px] flex flex-col bg-[#f0f0f0] shrink-0 border-r border-b border-[#a0a0a0] box-content -mr-px">
        <div className="h-[34px] flex items-center shrink-0 text-[#111] border-t border-[#fff]">
          <span className="ml-[114px] w-3 h-3 rounded-full border border-[#333] bg-white flex items-center justify-center"><span className="w-[6px] h-[6px] rounded-full bg-[#111]" /></span>
          <span className="ml-[3px]">角度放坡形式</span>
          <span className="ml-[217px] w-3 h-3 rounded-full border border-[#333] bg-white" />
          <span className="ml-[3px]">底宽放坡形式</span>
        </div>
        <Cad />
        <div className="h-[44px] flex items-start justify-end shrink-0">
          <div className="mt-[12px] mr-[27px] w-[72px] h-[23px] border border-[#adadad] bg-[#e1e1e1] flex items-center justify-center text-[#111]">配筋形式</div>
        </div>
      </div>
    </div>
  );
}

function Sogou() {
  return (
    <>
      <div className="absolute left-[856px] -top-[34px] w-[48px] h-[50px] rounded-full bg-[#4cc25f] border-2 border-[#b8b8b8] flex items-end justify-center pb-[1px] text-white font-bold text-[12px] [font-family:'Liberation_Sans',sans-serif]">72</div>
      <div className="absolute left-[839px] top-[14px] w-[182px] h-[23px] bg-[#f3f7fb] border border-[#a9c6e4] flex items-center pl-[8px] text-[#1b78d6]">
        <span className="w-[16px] text-[14px] font-bold leading-none">中</span>
        <span className="ml-[8px] text-[13px] font-bold leading-none">°,</span>
        <span className="ml-[9px]"><Smile size={15} strokeWidth={1.800} /></span>
        <span className="ml-[6px]"><Mic size={15} strokeWidth={2.400} /></span>
        <span className="ml-[7px]"><Keyboard size={16} strokeWidth={2} /></span>
        <span className="ml-[6px]"><User size={15} color="#93a9bf" fill="#93a9bf" /></span>
        <span className="ml-[8px]"><Shirt size={15} fill="#1b78d6" /></span>
        <span className="ml-[7px]"><Wrench size={14} strokeWidth={2.500} /></span>
      </div>
      <div className="absolute left-[814px] top-[11px] w-[27px] h-[27px] rounded-[6px] bg-[#ef5022] flex items-center justify-center text-white font-bold text-[22px] leading-none [font-family:'Liberation_Sans',sans-serif]">S</div>
    </>
  );
}

export default function App() {
  return (
    <div className="relative w-[1366px] h-[768px] overflow-hidden bg-[#f0f0f0] flex flex-col text-[12px] leading-none [font-family:'Noto_Sans_CJK_SC','Liberation_Sans',sans-serif]">
      <TitleBar />
      <InfoRow />
      <ToolRow />
      <div className="h-[624px] flex shrink-0">
        <LeftPanel />
        <MidColumn />
      </div>
      <StatusBar />
      <Taskbar />
      <Dialog />
      <Sogou />
    </div>
  );
}
